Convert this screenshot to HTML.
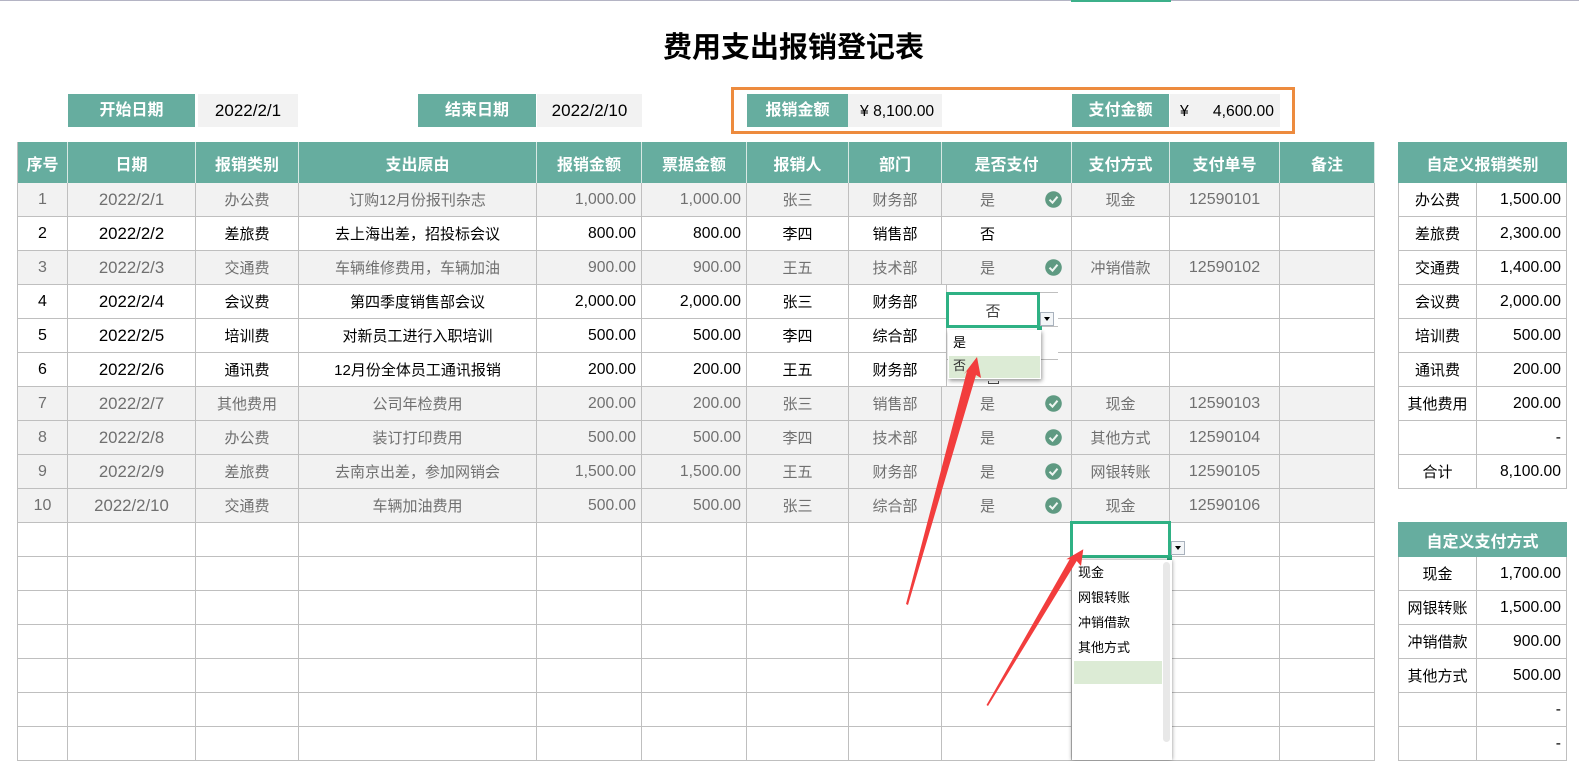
<!DOCTYPE html>
<html lang="zh">
<head>
<meta charset="utf-8">
<title>费用支出报销登记表</title>
<style>
html,body{margin:0;padding:0;background:#fff;}
body{width:1579px;height:756px;overflow:hidden;position:relative;font-family:"Liberation Sans","Noto Sans CJK SC",sans-serif;font-size:15px;color:#000;}
.a{position:absolute;box-sizing:border-box;}
table{position:absolute;border-collapse:separate;border-spacing:0;table-layout:fixed;}
td,th{box-sizing:border-box;padding:0;height:34px;border-right:1px solid #bfbfbf;border-bottom:1px solid #bfbfbf;text-align:center;white-space:nowrap;overflow:hidden;font-weight:400;font-size:15px;}
td:first-child,th:first-child{border-left:1px solid #bfbfbf;}
th{height:41px;background:#66ad9f;color:#fff;font-weight:700;font-size:16px;border-color:#d8e8e4;border-bottom:0;}
tr.g td{background:#f2f2f2;color:#707070;}
td.n{font-size:16px;padding-top:1px;}
td.d{font-size:16.8px;padding-top:1px;}
td.r{text-align:right;padding-right:5px;padding-top:1px;font-size:15.7px;}
td.y{text-align:left;padding-left:38px;}
.lab{background:#66ad9f;color:#fff;font-weight:700;font-size:16px;text-align:center;line-height:34px;height:33px;top:94px;}
.val{background:#f2f2f2;font-size:17px;line-height:33px;height:33px;top:94px;text-align:center;}
.amt{line-height:35px;font-size:15.7px;}
.chk{position:absolute;width:17px;height:17px;}
.ln{position:absolute;height:1px;background:#bfbfbf;}
.btn{position:absolute;width:14px;height:14px;background:#f4f6f8;border:1px solid #a9b2bd;box-sizing:border-box;}
.btn:after{content:"";position:absolute;left:3px;top:4px;border-left:3.5px solid transparent;border-right:3.5px solid transparent;border-top:4px solid #000;}
.dd{font-size:13px;position:absolute;left:6px;line-height:18px;}
</style>
</head>
<body>
<div class="a" style="left:0;top:0;width:1579px;height:1px;background:#b4b4c4;"></div>
<div class="a" style="left:1071px;top:0;width:100px;height:2px;background:#3cb08a;"></div>

<div class="a" style="left:663px;top:25px;width:262px;height:46px;line-height:46px;font-size:29px;font-weight:700;white-space:nowrap;">费用支出报销登记表</div>

<div class="a lab" style="left:68px;width:127px;">开始日期</div>
<div class="a val" style="left:198px;width:100px;">2022/2/1</div>
<div class="a lab" style="left:418px;width:118px;">结束日期</div>
<div class="a val" style="left:537px;width:105px;">2022/2/10</div>

<div class="a" style="left:731px;top:87px;width:564px;height:47px;border:3px solid #ed8b3e;"></div>
<div class="a lab" style="left:747px;width:101px;">报销金额</div>
<div class="a val amt" style="left:848px;width:94px;text-align:left;padding-left:12px;">¥ 8,100.00</div>
<div class="a lab" style="left:1072px;width:97px;">支付金额</div>
<div class="a val amt" style="left:1170px;width:110px;text-align:left;padding-left:10px;">¥<span style="position:absolute;right:6px;">4,600.00</span></div>

<table style="left:17px;top:142px;width:1358px;">
<colgroup><col style="width:51px"><col style="width:128px"><col style="width:103px"><col style="width:238px"><col style="width:105px"><col style="width:105px"><col style="width:102px"><col style="width:93px"><col style="width:130px"><col style="width:98px"><col style="width:110px"><col style="width:95px"></colgroup>
<tr><th>序号</th><th>日期</th><th>报销类别</th><th>支出原由</th><th>报销金额</th><th>票据金额</th><th>报销人</th><th>部门</th><th>是否支付</th><th>支付方式</th><th>支付单号</th><th>备注</th></tr>
<tr class="g"><td class="n">1</td><td class="d">2022/2/1</td><td>办公费</td><td>订购12月份报刊杂志</td><td class="r">1,000.00</td><td class="r">1,000.00</td><td>张三</td><td>财务部</td><td class="y">是</td><td>现金</td><td class="n">12590101</td><td></td></tr>
<tr><td class="n">2</td><td class="d">2022/2/2</td><td>差旅费</td><td>去上海出差，招投标会议</td><td class="r">800.00</td><td class="r">800.00</td><td>李四</td><td>销售部</td><td class="y">否</td><td></td><td></td><td></td></tr>
<tr class="g"><td class="n">3</td><td class="d">2022/2/3</td><td>交通费</td><td>车辆维修费用，车辆加油</td><td class="r">900.00</td><td class="r">900.00</td><td>王五</td><td>技术部</td><td class="y">是</td><td>冲销借款</td><td class="n">12590102</td><td></td></tr>
<tr><td class="n">4</td><td class="d">2022/2/4</td><td>会议费</td><td>第四季度销售部会议</td><td class="r">2,000.00</td><td class="r">2,000.00</td><td>张三</td><td>财务部</td><td></td><td></td><td></td><td></td></tr>
<tr><td class="n">5</td><td class="d">2022/2/5</td><td>培训费</td><td>对新员工进行入职培训</td><td class="r">500.00</td><td class="r">500.00</td><td>李四</td><td>综合部</td><td></td><td></td><td></td><td></td></tr>
<tr><td class="n">6</td><td class="d">2022/2/6</td><td>通讯费</td><td>12月份全体员工通讯报销</td><td class="r">200.00</td><td class="r">200.00</td><td>王五</td><td>财务部</td><td></td><td></td><td></td><td></td></tr>
<tr class="g"><td class="n">7</td><td class="d">2022/2/7</td><td>其他费用</td><td>公司年检费用</td><td class="r">200.00</td><td class="r">200.00</td><td>张三</td><td>销售部</td><td class="y">是</td><td>现金</td><td class="n">12590103</td><td></td></tr>
<tr class="g"><td class="n">8</td><td class="d">2022/2/8</td><td>办公费</td><td>装订打印费用</td><td class="r">500.00</td><td class="r">500.00</td><td>李四</td><td>技术部</td><td class="y">是</td><td>其他方式</td><td class="n">12590104</td><td></td></tr>
<tr class="g"><td class="n">9</td><td class="d">2022/2/9</td><td>差旅费</td><td>去南京出差，参加网销会</td><td class="r">1,500.00</td><td class="r">1,500.00</td><td>王五</td><td>财务部</td><td class="y">是</td><td>网银转账</td><td class="n">12590105</td><td></td></tr>
<tr class="g"><td class="n">10</td><td class="d">2022/2/10</td><td>交通费</td><td>车辆加油费用</td><td class="r">500.00</td><td class="r">500.00</td><td>张三</td><td>综合部</td><td class="y">是</td><td>现金</td><td class="n">12590106</td><td></td></tr>
<tr><td></td><td></td><td></td><td></td><td></td><td></td><td></td><td></td><td></td><td></td><td></td><td></td></tr>
<tr><td></td><td></td><td></td><td></td><td></td><td></td><td></td><td></td><td></td><td></td><td></td><td></td></tr>
<tr><td></td><td></td><td></td><td></td><td></td><td></td><td></td><td></td><td></td><td></td><td></td><td></td></tr>
<tr><td></td><td></td><td></td><td></td><td></td><td></td><td></td><td></td><td></td><td></td><td></td><td></td></tr>
<tr><td></td><td></td><td></td><td></td><td></td><td></td><td></td><td></td><td></td><td></td><td></td><td></td></tr>
<tr><td></td><td></td><td></td><td></td><td></td><td></td><td></td><td></td><td></td><td></td><td></td><td></td></tr>
<tr><td></td><td></td><td></td><td></td><td></td><td></td><td></td><td></td><td></td><td></td><td></td><td></td></tr>
</table>

<table style="left:1398px;top:142px;width:169px;">
<colgroup><col style="width:79px"><col style="width:90px"></colgroup>
<tr><th colspan="2" style="border-right:0;border-left:0;">自定义报销类别</th></tr>
<tr><td>办公费</td><td class="r">1,500.00</td></tr>
<tr><td>差旅费</td><td class="r">2,300.00</td></tr>
<tr><td>交通费</td><td class="r">1,400.00</td></tr>
<tr><td>会议费</td><td class="r">2,000.00</td></tr>
<tr><td>培训费</td><td class="r">500.00</td></tr>
<tr><td>通讯费</td><td class="r">200.00</td></tr>
<tr><td>其他费用</td><td class="r">200.00</td></tr>
<tr><td></td><td class="r">-</td></tr>
<tr><td>合计</td><td class="r">8,100.00</td></tr>
</table>

<table style="left:1398px;top:522px;width:169px;">
<colgroup><col style="width:79px"><col style="width:90px"></colgroup>
<tr><th colspan="2" style="height:35px;border-right:0;border-left:0;">自定义支付方式</th></tr>
<tr><td>现金</td><td class="r">1,700.00</td></tr>
<tr><td>网银转账</td><td class="r">1,500.00</td></tr>
<tr><td>冲销借款</td><td class="r">900.00</td></tr>
<tr><td>其他方式</td><td class="r">500.00</td></tr>
<tr><td></td><td class="r">-</td></tr>
<tr><td></td><td class="r">-</td></tr>
</table>

<svg class="chk" style="left:1045px;top:191px;" viewBox="0 0 17 17"><circle cx="8.5" cy="8.5" r="8.3" fill="#5f9a82"/><path d="M4.5 8.7l3 3 5-6" fill="none" stroke="#eef5f1" stroke-width="2"/></svg>
<svg class="chk" style="left:1045px;top:259px;" viewBox="0 0 17 17"><circle cx="8.5" cy="8.5" r="8.3" fill="#5f9a82"/><path d="M4.5 8.7l3 3 5-6" fill="none" stroke="#eef5f1" stroke-width="2"/></svg>
<svg class="chk" style="left:1045px;top:395px;" viewBox="0 0 17 17"><circle cx="8.5" cy="8.5" r="8.3" fill="#5f9a82"/><path d="M4.5 8.7l3 3 5-6" fill="none" stroke="#eef5f1" stroke-width="2"/></svg>
<svg class="chk" style="left:1045px;top:429px;" viewBox="0 0 17 17"><circle cx="8.5" cy="8.5" r="8.3" fill="#5f9a82"/><path d="M4.5 8.7l3 3 5-6" fill="none" stroke="#eef5f1" stroke-width="2"/></svg>
<svg class="chk" style="left:1045px;top:463px;" viewBox="0 0 17 17"><circle cx="8.5" cy="8.5" r="8.3" fill="#5f9a82"/><path d="M4.5 8.7l3 3 5-6" fill="none" stroke="#eef5f1" stroke-width="2"/></svg>
<svg class="chk" style="left:1045px;top:497px;" viewBox="0 0 17 17"><circle cx="8.5" cy="8.5" r="8.3" fill="#5f9a82"/><path d="M4.5 8.7l3 3 5-6" fill="none" stroke="#eef5f1" stroke-width="2"/></svg>

<!-- first dropdown -->
<div class="a" style="left:941px;top:285px;width:117px;height:101px;background:#fff;"></div>
<div class="a" style="left:946px;top:285px;width:1px;height:101px;background:#bfbfbf;"></div>
<div class="ln" style="left:941px;top:318px;width:5px;"></div>
<div class="ln" style="left:941px;top:352px;width:5px;"></div>
<div class="ln" style="left:946px;top:292px;width:112px;"></div>
<div class="ln" style="left:946px;top:326px;width:112px;"></div>
<div class="ln" style="left:946px;top:359px;width:112px;"></div>
<div class="a" style="left:946px;top:292px;width:94px;height:36px;border:3px solid #2fb184;background:#fff;text-align:center;line-height:33px;font-size:15px;color:#444;">否</div>
<div class="a" style="left:1037px;top:325px;width:5px;height:5px;background:#2fb184;"></div>
<div class="btn" style="left:1040px;top:312px;"></div>
<div class="a" style="left:948px;top:330px;width:93px;height:49px;background:#fff;box-shadow:1px 2px 4px rgba(0,0,0,.4);">
  <div class="a" style="left:1px;top:26px;width:91px;height:22px;background:#dcebd5;"></div>
  <div class="dd" style="left:5px;top:4px;">是</div>
  <div class="dd" style="left:5px;top:27px;color:#333;">否</div>
</div>
<div class="a" style="left:988px;top:381px;width:11px;height:3px;border:1px solid #444;border-top:0;"></div>

<!-- second dropdown -->
<div class="a" style="left:1070px;top:521px;width:101px;height:37px;border:3px solid #2fb184;"></div>
<div class="a" style="left:1167px;top:555px;width:5px;height:5px;background:#2fb184;"></div>
<div class="btn" style="left:1171px;top:541px;"></div>
<div class="a" style="left:1072px;top:560px;width:100px;height:200px;background:#fff;box-shadow:0 0 4px rgba(0,0,0,.45);">
  <div class="dd" style="top:4px;">现金</div>
  <div class="dd" style="top:29px;">网银转账</div>
  <div class="dd" style="top:54px;">冲销借款</div>
  <div class="dd" style="top:79px;">其他方式</div>
  <div class="a" style="left:2px;top:101px;width:88px;height:23px;background:#dcebd5;"></div>
  <div class="a" style="left:91px;top:2px;width:7px;height:180px;background:#e8e8e8;border-radius:4px;"></div>
</div>

<svg class="a" style="left:0;top:0;" width="1579" height="756" viewBox="0 0 1579 756">
<polygon fill="#f23d3d" points="977,357 981,378 976,375 908,605 906,604 967,371 964,374"/>
<polygon fill="#f23d3d" points="1083.3,549.3 1081,566 1076.7,561 988,706 986.5,705 1069.7,559.3 1066.3,559.3"/>
</svg>
</body>
</html>
